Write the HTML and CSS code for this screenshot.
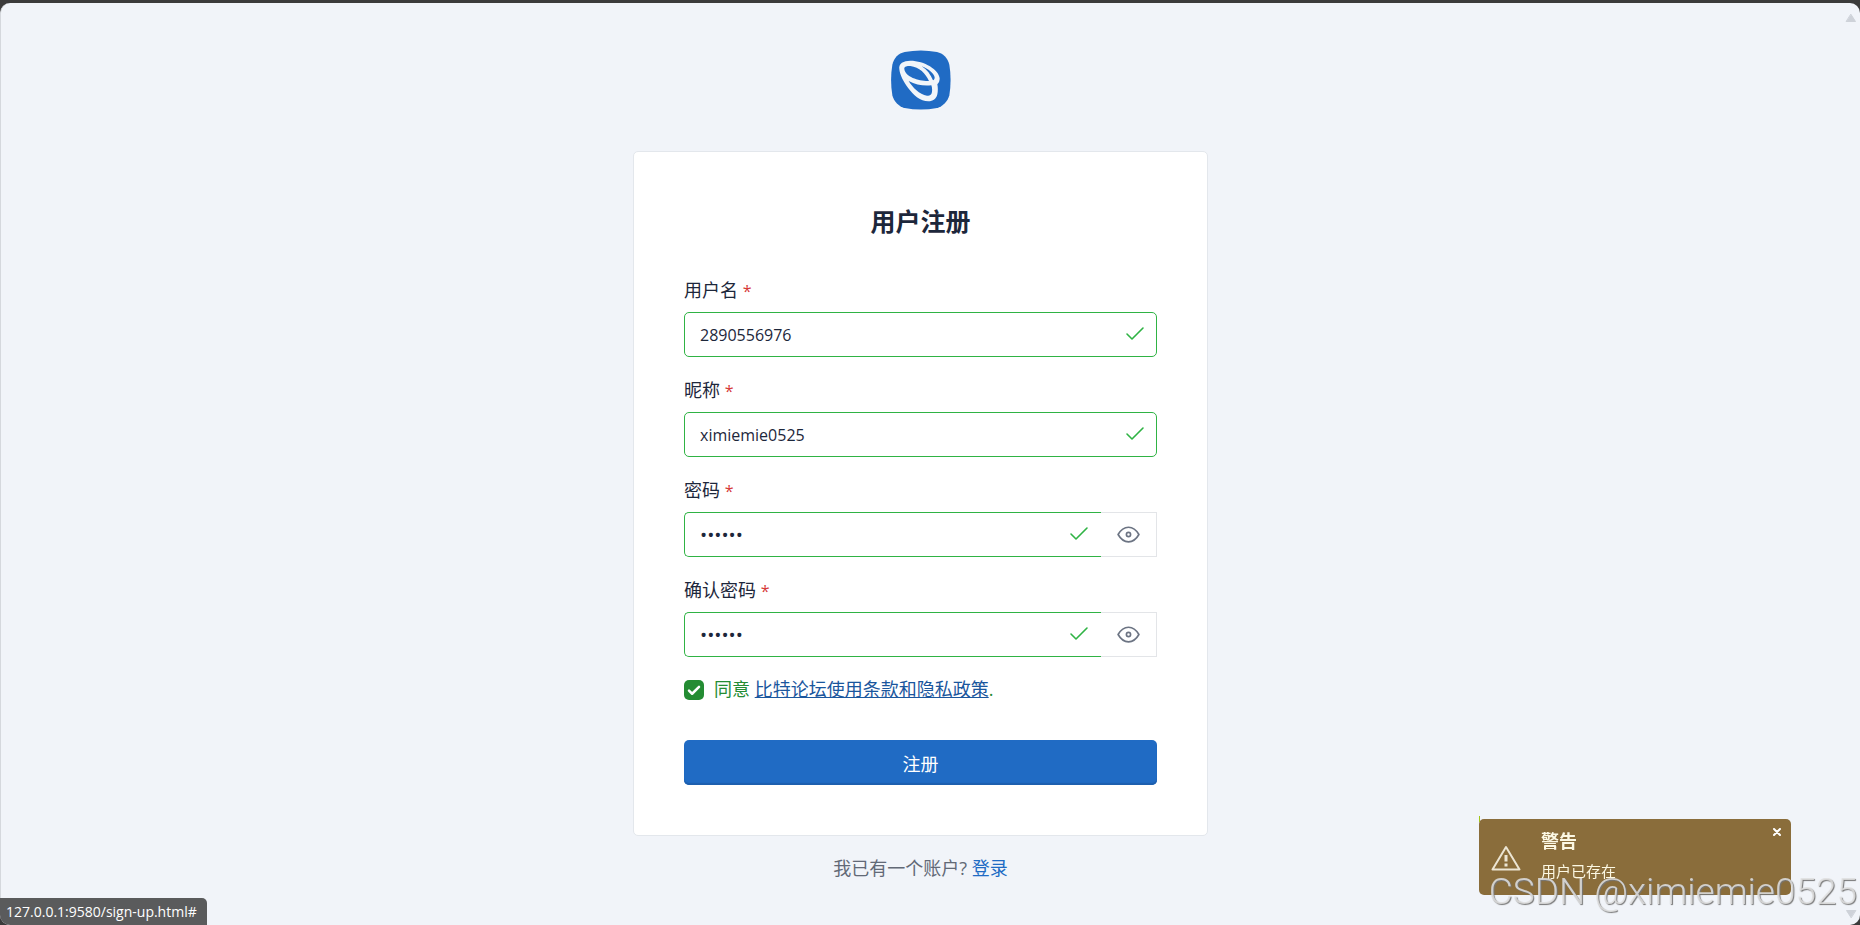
FILE: index.html
```html
<!DOCTYPE html>
<html lang="zh-CN">

<head>
    <meta charset="UTF-8">
    <meta name="viewport" content="width=device-width, initial-scale=1.0">
    <title>用户注册</title>
    <link rel="stylesheet" href="styles.css">
</head>

<body>
    <div class="window">
        <main class="page">
            <a href="#" class="logo" aria-label="首页">
                <svg viewBox="92 60 180 180">
                    <path fill="#206bc4" d="M267 104C262 84 248 70 230 66C198 60 165 60 133 66C114 70 101 84 96 104C91 134 91 166 96 196C101 215 114 229 133 234C165 240 198 240 230 234C248 229 262 215 267 196C272 166 272 134 267 104Z" />
                    <path fill="#f1f5f9" fill-rule="evenodd" d="M117 118C114 100 130 92 150 92C192 92 236 119 238 145C238 153 236 158 231 163C233 173 233 184 231 193C228 207 218 214 204 214C180 214 160 196 144 175C129 155 119 135 117 118Z
                        M132 117C131 109 140 107 150 108C177 111 196 131 206 153C176 154 135 141 132 117Z
                        M184 109C204 116 221 131 223 142C223 147 221 150 218 151C211 134 200 119 184 109Z
                        M145 153C166 164 190 169 213 166C216 174 216 184 214 190C212 196 207 198 200 197C177 194 157 172 145 153Z" />
                </svg>
            </a>

            <form class="card">
                <h2 class="title">用户注册</h2>

                <div class="field">
                    <label for="username">用户名 <span class="required">*</span></label>
                    <div class="control">
                        <input type="text" id="username" value="2890556976">
                        <svg class="check" viewBox="0 0 24 24"><path d="M20 6L9 17l-5-5" /></svg>
                    </div>
                </div>

                <div class="field">
                    <label for="nickname">昵称 <span class="required">*</span></label>
                    <div class="control">
                        <input type="text" id="nickname" value="ximiemie0525">
                        <svg class="check" viewBox="0 0 24 24"><path d="M20 6L9 17l-5-5" /></svg>
                    </div>
                </div>

                <div class="field">
                    <label for="password">密码 <span class="required">*</span></label>
                    <div class="group">
                        <div class="control">
                            <input type="password" id="password" value="123456">
                            <svg class="check" viewBox="0 0 24 24"><path d="M20 6L9 17l-5-5" /></svg>
                        </div>
                        <button type="button" class="toggle" aria-label="显示密码">
                            <svg viewBox="0 0 24 24">
                                <circle cx="12" cy="12" r="2" />
                                <path d="M22 12c-2.667 4.667-6 7-10 7s-7.333-2.333-10-7c2.667-4.667 6-7 10-7s7.333 2.333 10 7" />
                            </svg>
                        </button>
                    </div>
                </div>

                <div class="field">
                    <label for="password-repeat">确认密码 <span class="required">*</span></label>
                    <div class="group">
                        <div class="control">
                            <input type="password" id="password-repeat" value="123456">
                            <svg class="check" viewBox="0 0 24 24"><path d="M20 6L9 17l-5-5" /></svg>
                        </div>
                        <button type="button" class="toggle" aria-label="显示密码">
                            <svg viewBox="0 0 24 24">
                                <circle cx="12" cy="12" r="2" />
                                <path d="M22 12c-2.667 4.667-6 7-10 7s-7.333-2.333-10-7c2.667-4.667 6-7 10-7s7.333 2.333 10 7" />
                            </svg>
                        </button>
                    </div>
                </div>

                <div class="policy">
                    <span class="tick">
                        <input type="checkbox" id="policy" checked>
                        <svg viewBox="0 0 16 16"><path d="M4 8.5l2.5 2.5 5.5-5.5" /></svg>
                    </span>
                    <label for="policy">同意 <a href="#">比特论坛使用条款和隐私政策</a>.</label>
                </div>

                <button type="submit" class="submit">注册</button>
            </form>

            <p class="signin">我已有一个账户? <a href="#">登录</a></p>
        </main>

        <div class="scrollbar">
            <svg viewBox="0 0 12 10"><path d="M6 1.5L10.5 8.5H1.5Z" /></svg>
            <svg viewBox="0 0 12 10"><path d="M6 8.5L1.5 1.5H10.5Z" /></svg>
        </div>
    </div>

    <div class="toast" role="alert">
        <svg class="warning" viewBox="0 0 30 26">
            <path d="M15 2L28.500 24.500H1.500Z" />
            <path class="mark" d="M15 10v6.500M15 18.500v3" />
        </svg>
        <div class="toast-text">
            <h3>警告</h3>
            <p>用户已存在</p>
        </div>
        <button type="button" class="close" aria-label="关闭">
            <svg viewBox="0 0 8 8"><path d="M1 1l6 6M7 1l-6 6" /></svg>
        </button>
    </div>

    <div class="status">127.0.0.1:9580/sign-up.html#</div>
    <div class="watermark">CSDN @ximiemie0525</div>
</body>

</html>
```
FILE: styles.css
```css
* {
    margin: 0;
    padding: 0;
    box-sizing: border-box;
}

body {
    height: 100vh;
    padding-top: 3px;
    overflow: hidden;
    background-color: #3b3b3b;
    color: #1d273b;
    font-family: "Open Sans", "Noto Sans CJK SC", sans-serif;
    font-size: 18px;
    line-height: 25px;
}

svg {
    display: block;
    fill: none;
    stroke-linecap: round;
    stroke-linejoin: round;
}

input,
button {
    font-family: inherit;
    font-size: inherit;
}

a {
    color: #206bc4;
    text-decoration: none;
}

.window {
    display: flex;
    height: 100%;
    border-left: 1px solid #d5d8dd;
    border-radius: 10px;
    background-color: #f1f4f9;
}

.page {
    flex: 1;
    display: flex;
    flex-direction: column;
    align-items: center;
    padding-top: 47px;
}

.logo svg {
    width: 60px;
    height: 60px;
}

/* form card */
.card {
    width: 100%;
    max-width: 575px;
    margin: 41px 0 20px;
    padding: 50px;
    border: 1px solid #e3e7ec;
    border-radius: 5px;
    background-color: white;
}

.title {
    margin-bottom: 37px;
    font-size: 25px;
    line-height: 38px;
    text-align: center;
}

.field {
    margin-bottom: 20px;
}

.field label {
    display: block;
    margin-bottom: 8px;
    line-height: 27px;
}

.required {
    color: #d63939;
    font-size: 16px;
    line-height: 16px;
}

.group {
    display: flex;
}

.control {
    position: relative;
    flex: 1;
}

.control input {
    display: block;
    width: 100%;
    height: 45px;
    padding: 0 40px 0 15px;
    border: 1px solid #2fb344;
    border-radius: 5px;
    outline: none;
    background-color: white;
    color: inherit;
    font-size: 16px;
}

.check {
    position: absolute;
    top: 10px;
    right: 10px;
    width: 24px;
    height: 24px;
    stroke: #2fb344;
    stroke-width: 1.6;
}

.group input {
    border-right: none;
    border-radius: 5px 0 0 5px;
    font-size: 19px;
}

.toggle {
    display: flex;
    align-items: center;
    justify-content: center;
    width: 56px;
    border: 1px solid #e3e5e8;
    border-left: none;
    background-color: white;
    cursor: pointer;
}

.toggle svg {
    width: 25px;
    height: 25px;
    stroke: #6c7483;
    stroke-width: 1.6;
}

.policy {
    display: flex;
    align-items: center;
    gap: 10px;
    color: #248c33;
}

.policy a {
    color: #1a569d;
    text-decoration: underline;
}

.tick {
    position: relative;
}

.tick input {
    appearance: none;
    display: block;
    width: 20px;
    height: 20px;
    border-radius: 5px;
    background-color: #248c33;
}

.tick svg {
    position: absolute;
    inset: 0;
    stroke: white;
    stroke-width: 2;
    pointer-events: none;
}

.submit {
    width: 100%;
    height: 45px;
    margin-top: 38px;
    border: none;
    border-radius: 5px;
    background-color: #206bc4;
    box-shadow: inset 0 -2px 1px #1d5fae;
    color: white;
    cursor: pointer;
}

.signin {
    color: #626976;
}

/* browser scrollbar */
.scrollbar {
    display: flex;
    flex-direction: column;
    justify-content: space-between;
    padding: 10px 3px 6px 5px;
}

.scrollbar svg {
    width: 12px;
    height: 10px;
    fill: #ced2d9;
    stroke: #ced2d9;
}

/* warning message */
.toast {
    position: fixed;
    right: 69px;
    bottom: 30px;
    display: flex;
    align-items: flex-start;
    gap: 20px;
    width: 312px;
    height: 76px;
    padding: 0 12px;
    border-radius: 5px;
    background-color: #8a6d3b;
    color: #fcf8e3;
}

.toast::before {
    content: "";
    position: absolute;
    top: -3px;
    left: 0;
    width: 1px;
    height: 6px;
    background-color: #a2c617;
}

.warning {
    width: 30px;
    height: 26px;
    margin-top: 26px;
    stroke: #ece5d3;
    stroke-width: 2;
}

.warning .mark {
    stroke-width: 3;
    stroke-linecap: butt;
}

.toast-text {
    padding-top: 10px;
}

.toast h3 {
    font-size: 18px;
}

.toast p {
    margin-top: 5px;
    font-size: 15px;
}

.close {
    position: absolute;
    top: 9px;
    right: 10px;
    border: none;
    background: none;
    cursor: pointer;
}

.close svg {
    width: 8px;
    height: 8px;
    stroke: white;
    stroke-width: 2;
}

.status {
    position: fixed;
    left: 0;
    bottom: 0;
    padding: 1px 10px 1px 6px;
    border-radius: 0 5px 0 10px;
    background-color: #5a5b5c;
    color: white;
    font-size: 14px;
}

.watermark {
    position: fixed;
    right: 3px;
    bottom: 10px;
    color: rgba(225, 225, 225, 0.85);
    font-family: Roboto, sans-serif;
    font-size: 37px;
    font-weight: 300;
    line-height: 46px;
    text-shadow: 1px 1px 1px #777;
    pointer-events: none;
}
```
